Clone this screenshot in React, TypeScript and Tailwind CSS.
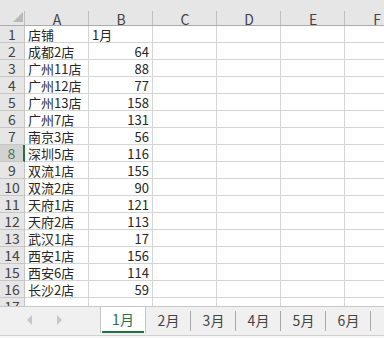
const rows: [string, number][] = [
  ['成都2店', 64],
  ['广州11店', 88],
  ['广州12店', 77],
  ['广州13店', 158],
  ['广州7店', 131],
  ['南京3店', 56],
  ['深圳5店', 116],
  ['双流1店', 155],
  ['双流2店', 90],
  ['天府1店', 121],
  ['天府2店', 113],
  ['武汉1店', 17],
  ['西安1店', 156],
  ['西安6店', 114],
  ['长沙2店', 59],
]

const cols = ['A', 'B', 'C', 'D', 'E', 'F']
const tabs = ['2月', '3月', '4月', '5月', '6月']

function EmptyCells() {
  return (
    <>
      <div className="border-r border-b border-[#d4d4d4]" />
      <div className="border-r border-b border-[#d4d4d4]" />
      <div className="border-r border-b border-[#d4d4d4]" />
      <div className="border-b border-[#d4d4d4]" />
    </>
  )
}

export default function App() {
  return (
    <div
      className="w-[384px] h-[338px] overflow-hidden bg-white flex flex-col text-[#262626]"
      style={{ fontFamily: '"Noto Sans CJK SC", "Microsoft YaHei", sans-serif' }}
    >
      <div className="h-[306px] overflow-hidden">
        <div className="grid grid-cols-[25px_64px_64px_64px_64px_64px_64px] grid-rows-[26px_repeat(17,17px)] text-[13px] leading-[17px]">
          {/* header row */}
          <div className="bg-[#e6e6e6] border-b border-[#ababab] relative">
            <div className="absolute right-[2px] bottom-[3px] w-0 h-0 border-l-[10px] border-l-transparent border-b-[10px] border-b-[#b9b9b9]" />
          </div>
          {cols.map((c) => (
            <div key={c} className="bg-[#e6e6e6] border-b border-[#ababab] relative text-center pt-[13px] leading-[12px] text-[14px] text-[#444]">
              <div className="absolute left-[-1px] top-[11px] bottom-0 w-px bg-[#c0c0c0]" />
              {c}
            </div>
          ))}

          {/* row 1 */}
          <div className="bg-[#e6e6e6] border-r border-b border-[#c6c6c6] text-center text-[14px] text-[#444]">1</div>
          <div className="border-r border-b border-[#d4d4d4] pl-[3px]">店铺</div>
          <div className="border-r border-b border-[#d4d4d4] pl-[3px]">1月</div>
          <EmptyCells />

          {rows.map(([name, v], i) => {
            const n = i + 2
            const sel = n === 8
            return (
              <div key={n} className="contents">
                <div
                  className={
                    sel
                      ? 'bg-[#d2d2d2] border-r-2 border-r-[#217346] border-b border-b-[#c6c6c6] text-center text-[14px] text-[#4b7a5c]'
                      : 'bg-[#e6e6e6] border-r border-b border-[#c6c6c6] text-center text-[14px] text-[#444]'
                  }
                >
                  {n}
                </div>
                <div className="border-r border-b border-[#d4d4d4] pl-[3px] whitespace-nowrap">{name}</div>
                <div className="border-r border-b border-[#d4d4d4] pr-[3px] text-right">{v}</div>
                <EmptyCells />
              </div>
            )
          })}

          {/* row 17 */}
          <div className="bg-[#e6e6e6] border-r border-[#c6c6c6] text-center text-[14px] text-[#444]">17</div>
          <div className="border-r border-[#d4d4d4]" />
          <div className="border-r border-[#d4d4d4]" />
          <div className="border-r border-[#d4d4d4]" />
          <div className="border-r border-[#d4d4d4]" />
          <div className="border-r border-[#d4d4d4]" />
          <div />
        </div>
      </div>

      {/* sheet tabs */}
      <div className="flex-1 border-t border-[#c6c6c6] bg-[#f0f0f0] flex flex-col">
        <div className="h-[26px] flex items-stretch text-[14px]">
          <div className="w-[100px] flex items-center">
            <div className="ml-[27px] w-0 h-0 border-y-[5px] border-y-transparent border-r-[5px] border-r-[#c8c8c8]" />
            <div className="ml-[25px] w-0 h-0 border-y-[5px] border-y-transparent border-l-[5px] border-l-[#c8c8c8]" />
          </div>
          <div className="w-[46px] bg-white border-x border-[#c6c6c6] flex flex-col">
            <div className="flex-1 flex items-center justify-center text-[#217346]">1月</div>
            <div className="h-[2px] mx-[1px] bg-[#217346]" />
          </div>
          {tabs.map((t) => (
            <div key={t} className="w-[45px] flex items-center justify-center relative text-[#444]">
              {t}
              <div className="absolute right-0 top-[4px] bottom-[2px] w-px bg-[#a8a8a8]" />
            </div>
          ))}
        </div>
        <div className="h-[2px]" />
        <div className="border-t border-[#d0d0d0] flex-1 bg-[#f7f7f7]" />
      </div>
    </div>
  )
}
